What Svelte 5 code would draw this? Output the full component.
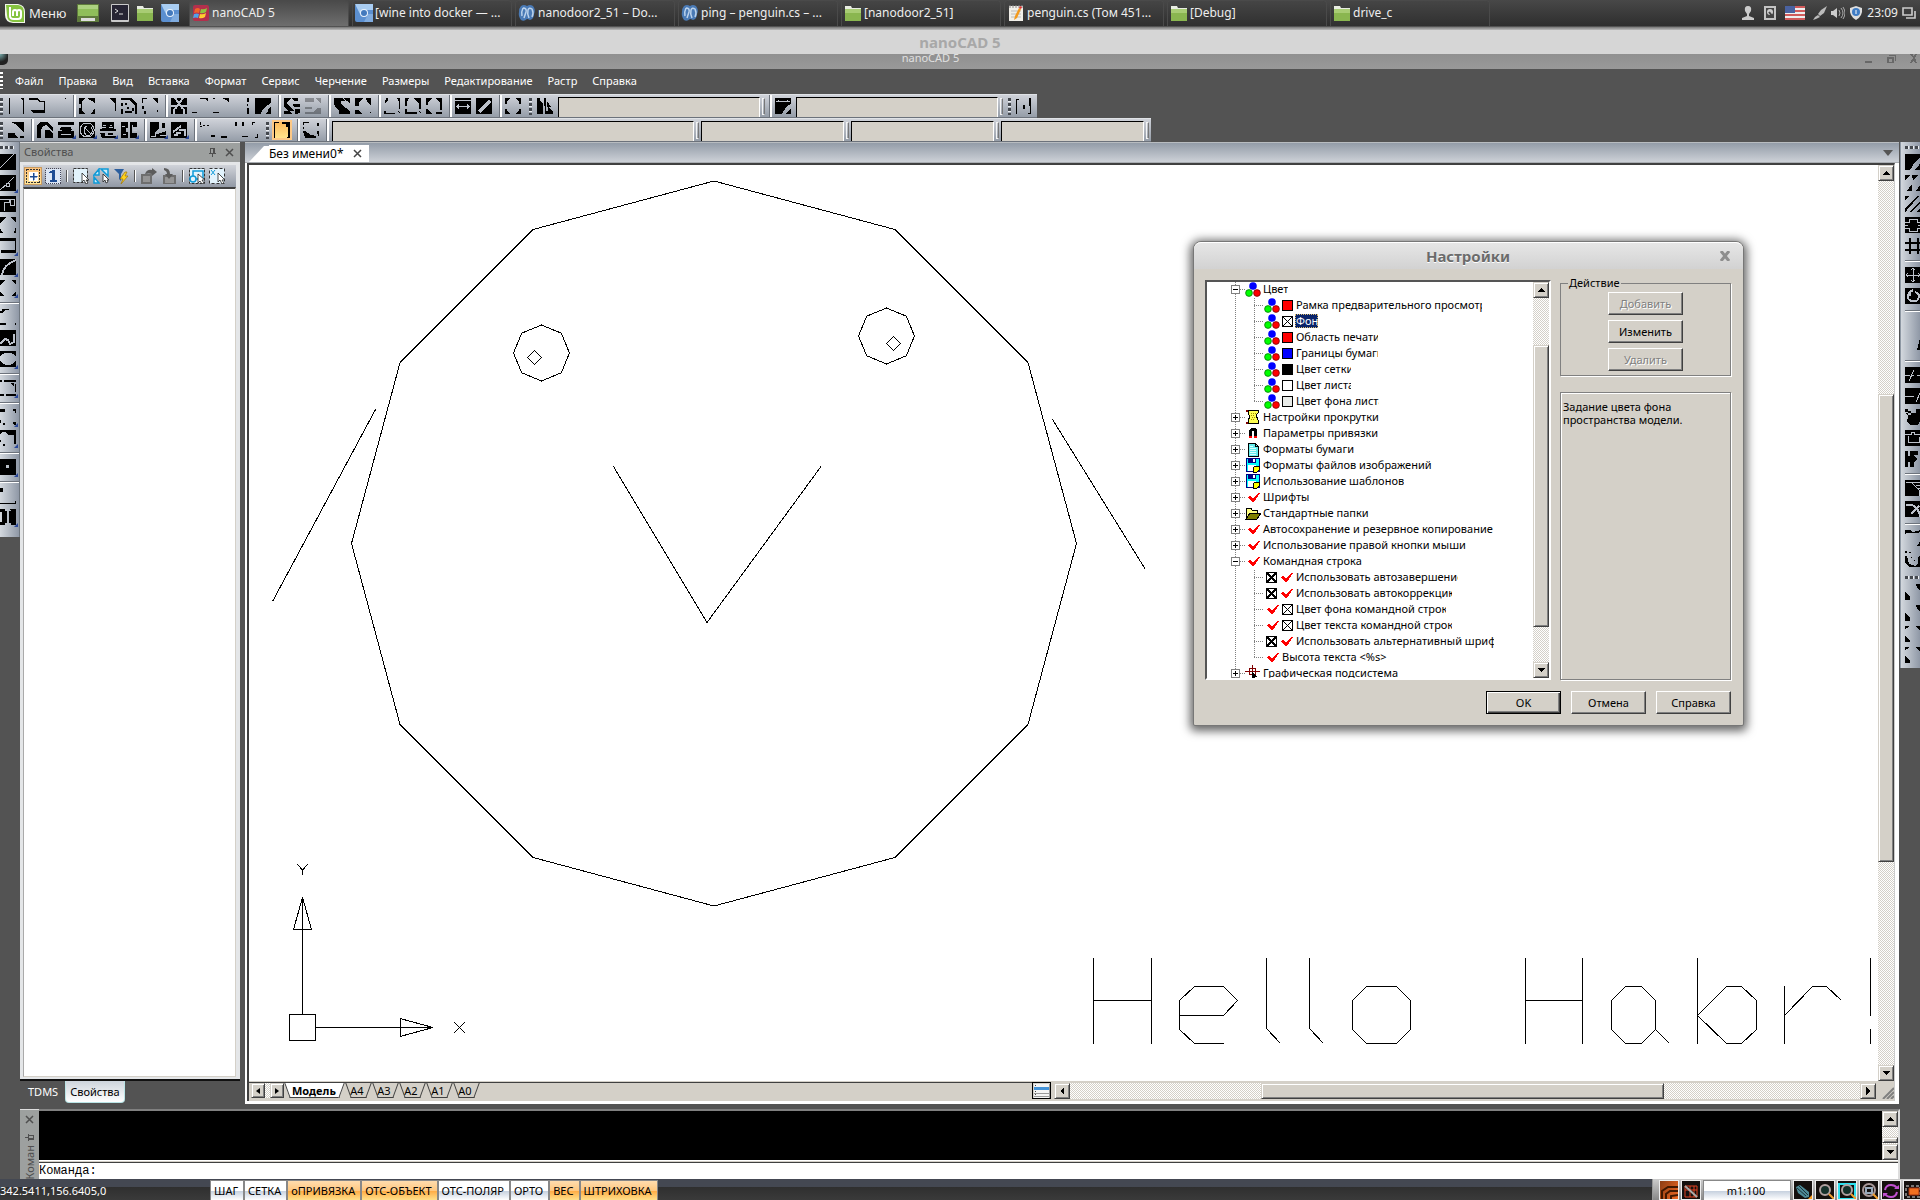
<script lang="ts">
  type Glyph = { k?: string; w?: string; sw?: number; more?: boolean; dim?: boolean };
  type TreeRow = {
    text: string;
    level: number;
    icon: string;
    open?: boolean;
    swatch?: string;
    check?: boolean;
    clip?: number;
    selected?: boolean;
    last?: boolean;
  };

  const box = 'M0 0h16v16H0z';

  const tasks = [
    { title: 'nanoCAD 5', icon: 'wine', active: true },
    { title: '[wine into docker — ...', icon: 'chromium' },
    { title: 'nanodoor2_51 – Do...', icon: 'mono' },
    { title: 'ping – penguin.cs – ...', icon: 'mono' },
    { title: '[nanodoor2_51]', icon: 'folder' },
    { title: 'penguin.cs (Том 451...', icon: 'edit' },
    { title: '[Debug]', icon: 'folder' },
    { title: 'drive_c', icon: 'folder' }
  ];

  const menu = ['Файл', 'Правка', 'Вид', 'Вставка', 'Формат', 'Сервис', 'Черчение', 'Размеры', 'Редактирование', 'Растр', 'Справка'];

  const standardBar: Glyph[][] = [
    [
      { k: 'M1 0h1v16H1zM12 0h4v16h-1V2z' },
      { k: 'M0 0h9l2 3h5v1h-6L8 2H0zM15 4h1v9h-1zM2 12h14v3H5l-3-2z' },
      { k: 'M14 0h2v2z' }
    ],
    [
      { k: 'M0 0h6L3 3v10l3 3H0v-6h2V6H0zM8 0h8v6l-3-3zM16 10v6h-5l3-3z' },
      { k: 'M9 0h7v13h-1V5z' },
      { k: 'M0 0h10l6 6v10h-2V7L8 2H0zM0 5h2v3H0zM0 11h2v5H0zM4 5h2v2H4zM4 13h7v2H4zM6 9h2v2H6zM11 10h2v3h-2z' },
      { k: 'M0 0h5v1H1v4H0zM10 0h6v5l-4-3zM0 8h2v3H0zM2 13h2v3H2zM15 12h1v2h-1z' }
    ],
    [
      { k: box, w: 'M4 0l8 11M12 0L4 11M0 8h5M11 8h5M3 11v5M13 11v5', sw: 2 },
      { k: 'M8 0h8v3l-3-2H8zM0 14h5v1H0z' },
      { k: 'M9 0h7v5l-3-3zM0 14h6v1H0zM0 0h2v1H0z' },
      { k: 'M13 0h2v4h-2zM13 6h1v2h-1zM13 10h2v6h-2z' },
      { k: 'M0 0h16v5L10 9l-3 3-1 4H0zM16 9v7h-6l3-2v-3z' }
    ],
    [
      { k: 'M0 0h14v3h-4L8 0 3 4v2l7 7H4L0 9zM9 6h7v3h-6zM0 13h5l3 3H0zM11 11h5v4l-5 1z' },
      { k: 'M0 0h9v4H0zM11 0h5v6zM0 9h7v2H0zM0 14h8l5-4h3v6H0z', dim: true }
    ],
    [
      { k: 'M0 0h8l3 3H7v3l9 7v3H5v-3L1 8 0 6zM9 0h7v5z' },
      { k: 'M0 0h8L4 4v4H0zM11 0h5v8l-4-4zM0 12h3l4 4H0zM15 14h1v1h-1z' }
    ],
    [
      { k: 'M2 0h2v2l-3 3zM13 0h3v11h-1V4zM0 13h2v2h9v1H0zM13 13l3 1v2z' },
      { k: 'M0 0h4L2 4v4H0zM8 0h8v11h-2V6zM0 11h2v3h10v2H0zM13 13l3 1v2z' },
      { k: 'M0 0h6L2 5v2H0zM10 0h6v12h-2V5zM0 11h2l4 5H0zM10 14h6v2h-6z' }
    ],
    [
      { k: box, w: 'M0 2.5h16M2 8.5h12M4 6.5l-2 2 2 2M12 6.5l2 2-2 2' },
      { k: box, w: 'M3 14L14 3', sw: 4 }
    ],
    [{ k: 'M0 0h5v1L2 3v3H0zM11 0h5v6h-2V3l-3-2zM0 11h2v2l3 2v1H0zM16 11v5h-5v-1l3-2v-2z' }]
  ];

  const drawBar: Glyph[][] = [
    [{ k: 'M3 0h13v10l-5-4-2-3zM0 11h7v2l3 3H0zM12 14h4v2h-4z' }],
    [
      { k: 'M0 16V3l3-3h7l6 6v3l-3-2-4-4-3 1-2 4v8zM8 8h4l4 4v4H8z' },
      { k: 'M0 0h16v3H0zM3 5h10l1 3H2zM0 9h3l1-1h8l1 1h3v7H0z', w: 'M3 12h10', more: true },
      { k: box, w: 'M8 1a7 7 0 1 0 .1 0M5 5l7 7M12 5a4 5 0 1 1-4-1', sw: 1, more: true },
      { k: 'M2 0h12v7h2v2H0V7h2zM0 11h5v3h3v-3h5v3h3v2H2z', w: 'M3 3h3M10 3h2M2 5h4M9 5h4M5 13h8', more: true },
      { k: 'M0 0h7v6H5v4h2v6H0zM9 0h7v5h-5v6h5v5H9z', w: 'M1 4h3M12 8h4M2 12h3M11 3v2', more: true }
    ],
    [
      { k: 'M0 0h9v7L4 11l3 1 9-3v7H0zM12 1h3v5h-3z', w: 'M1 14h4v-3M10 13h6', more: true },
      { k: box, w: 'M2 10l8-6M8 8h6v6M3 13h3v-2h4', sw: 2, more: true }
    ],
    [
      { k: 'M0 0h1v3H0zM3 3h2v1H3zM7 3h2v1H7zM11 13h4v2h-4zM0 4h2v1H0z' },
      { k: 'M14 0h2v4h-2zM0 14h6v2H0z' },
      { k: 'M0 0h2v4H0zM10 0h3v1h-2v2h-1zM0 14h6v1H0zM15 12h1v4h-3v-1h2z' }
    ]
  ];

  const leftBar: Glyph[][] = [
    [
      { k: box, w: 'M0 14L14 0' },
      { k: box, w: 'M0 15L7 9l7-7M6 8h3v3H6z', more: true },
      { k: box, w: 'M0 3h9v3H4v9M10 9V3h4v6z', sw: 1 },
      { k: 'M0 0h6L0 6zM10 0h6v6zM0 11l3 5H0zM16 10v6h-2z' },
      { k: 'M0 0h16v15H1v-3h14V3H0z', more: true },
      { k: box, w: 'M2 16Q3 6 16 1', sw: 2, more: true },
      { k: 'M0 0h5L0 5zM11 0h5v5zM0 11l4 5H0zM16 11v5h-4z', more: true }
    ],
    [
      { k: 'M2 0h7v1H5L3 4H0V2h2zM0 14h6v2H0zM15 14h1v2h-1z' },
      { k: box, w: 'M0 14L5 9l3 1 2 4 4-2V4', sw: 2 },
      { k: 'M0 0h16v5q-8-7-16 0zM0 10q8 8 16 0v6H0z', more: true }
    ],
    [{ k: 'M0 0h2v2H0zM4 0h12v2H4zM0 14h4v2H0zM6 14h10v2H6zM15 4h1v8h-1zM10 3h4v3z', more: true }],
    [
      { k: 'M0 0h5v3H0zM13 0h3v4h-1V2h-2zM0 11h1v3H0zM3 14h2v2H3zM13 13h3v3h-2z', more: true },
      { k: 'M0 0h16v14h-2V5H8L6 2H2L0 4zM0 10h1v2H0zM3 14h2v2H3z', more: true }
    ],
    [{ k: 'M0 0h16v16H0zM6 6v3h3V6z', more: true }],
    [
      { k: 'M0 0h3v4H0zM15 13h1v3H0v-1h15z' },
      { k: 'M0 0h5v2h2v12H5v2H0v-3h2V3H0zM9 0h7v16h-5v-2H9V2h2z', more: true }
    ]
  ];

  const rightBar: Glyph[][] = [
    [
      { k: 'M0 0h16v2l-6 6-5 8H0zM16 8v8h-7l4-3z' },
      { k: 'M0 0h5L0 5zM7 0h6L8 6zM2 16l5-7v7zM11 16l5-7v7z' },
      { k: 'M0 0h4L0 4zM0 12L12 0h2L2 14l-2 2zM4 16L16 4v2L6 16zM16 11v5h-5z' },
      { k: box, w: 'M0 5h4V2h8v3h4M0 11h4v3h8v-3h4M0 8h3M13 8h3', sw: 1 },
      { k: 'M4 0h2v4h6V0h2v4h2v2h-2v5h2v2h-2v3h-2v-3H6v3H4v-3H0v-2h4V6H0V4h4zM6 6v5h6V6z' }
    ],
    [
      { k: box, w: 'M8 1v14M1 8h14M6 3l2-2 2 2M6 13l2 2 2-2M3 6L1 8l2 2M13 6l2 2-2 2' },
      { k: box, w: 'M5 4q-5 6 1 9 7 2 8-4 0-4-4-5M8 2L5 4v4', sw: 2 }
    ],
    [{}, { k: 'M16 0v12h-4l3-12z' }],
    [
      { k: box, w: 'M0 8h5M7 8h2M12 8h4M4 14l5-11' },
      { k: box, w: 'M0 8h9M11 14l5-11' },
      { k: 'M0 4l3 3-1 6 4 3h7l2-4V4zM3 2h3v4H3zM11 0h5v4h-5zM0 0h3v3H0z' },
      { k: box, w: 'M0 4h6V2h3v2h7M3 6v6h11V7', sw: 1 },
      { k: 'M0 0h3v16H0zM5 0h8v4H9l3 4-3 3v5H5v-5H3V5h2zM15 0h1v16h-1z' }
    ],
    [
      { k: box, w: 'M1 2h5l8 8v6M7 2h9M11 5h5M13 8h3' },
      { k: box, w: 'M1 4h6q7 3 8 12M6 13l8-8', sw: 2 }
    ],
    [
      { k: 'M0 0h5l3 2 8-2v1l-3 2H2L0 4zM16 8v8h-4l2-3z' },
      { k: 'M0 0h2v2H0zM4 1h2v1H4zM0 5h2l2 8 6 2 3-3V6l3-1v11H4L0 11zM6 6h1v1H6zM9 9h1v1H9z' }
    ]
  ];

  const rightExtra: Glyph[] = [
    { k: 'M11 0h5v8l-4-5zM0 7l5 6v3H0z' },
    { k: 'M11 0h5v8l-4-5zM0 7l5 6v3H0z' },
    { k: 'M0 0h4v1L0 3zM10 0h6v6l-3-4zM0 10l5 4v2H0z' },
    { k: 'M0 0h4v1L0 3zM10 0h6v6l-3-4zM0 9l5 5v2H0z' }
  ];

  const sheets = ['A4', 'A3', 'A2', 'A1', 'A0'];

  const tree: TreeRow[] = [
    { text: 'Цвет', level: 1, icon: 'rgb', open: true },
    { text: 'Рамка предварительного просмотра', level: 2, icon: 'rgb', swatch: '#ff0000', clip: 187 },
    { text: 'Фон', level: 2, icon: 'rgb', swatch: 'none', clip: 23, selected: true },
    { text: 'Область печати', level: 2, icon: 'rgb', swatch: '#ff0000', clip: 83 },
    { text: 'Границы бумаги', level: 2, icon: 'rgb', swatch: '#0000ff', clip: 83 },
    { text: 'Цвет сетки', level: 2, icon: 'rgb', swatch: '#000000', clip: 56 },
    { text: 'Цвет листа', level: 2, icon: 'rgb', swatch: '#ffffff', clip: 56 },
    { text: 'Цвет фона листа', level: 2, icon: 'rgb', swatch: '#e9ece9', clip: 84, last: true },
    { text: 'Настройки прокрутки', level: 1, icon: 'scroll' },
    { text: 'Параметры привязки', level: 1, icon: 'magnet' },
    { text: 'Форматы бумаги', level: 1, icon: 'paper' },
    { text: 'Форматы файлов изображений', level: 1, icon: 'disk' },
    { text: 'Использование шаблонов', level: 1, icon: 'disk' },
    { text: 'Шрифты', level: 1, icon: 'tick' },
    { text: 'Стандартные папки', level: 1, icon: 'dir' },
    { text: 'Автосохранение и резервное копирование', level: 1, icon: 'tick' },
    { text: 'Использование правой кнопки мыши', level: 1, icon: 'tick' },
    { text: 'Командная строка', level: 1, icon: 'tick', open: true },
    { text: 'Использовать автозавершение', level: 2, icon: 'tick', check: true, clip: 163 },
    { text: 'Использовать автокоррекцию', level: 2, icon: 'tick', check: true, clip: 157 },
    { text: 'Цвет фона командной строки', level: 2, icon: 'tick', swatch: 'none', clip: 151 },
    { text: 'Цвет текста командной строки', level: 2, icon: 'tick', swatch: 'none', clip: 157 },
    { text: 'Использовать альтернативный шрифт', level: 2, icon: 'tick', check: true, clip: 199 },
    { text: 'Высота текста <%s>', level: 2, icon: 'tick', last: true },
    { text: 'Графическая подсистема', level: 1, icon: 'cross' }
  ];

  const modes = [
    { text: 'ШАГ', on: false },
    { text: 'СЕТКА', on: false },
    { text: 'оПРИВЯЗКА', on: true },
    { text: 'ОТС-ОБЪЕКТ', on: true },
    { text: 'ОТС-ПОЛЯР', on: false },
    { text: 'ОРТО', on: false },
    { text: 'ВЕС', on: true },
    { text: 'ШТРИХОВКА', on: true }
  ];

  // vertices of a regular polygon, first one to the right of the centre
  function ngon(n: number, cx: number, cy: number, r: number) {
    return Array.from({ length: n }, (_, i) => {
      const a = (i * 2 * Math.PI) / n;
      return `${(cx + r * Math.cos(a)).toFixed(1)},${(cy + r * Math.sin(a)).toFixed(1)}`;
    }).join(' ');
  }
</script>

{#snippet tool(g: Glyph)}
  <button class="tool" class:dim={g.dim} aria-label="Инструмент">
    <svg viewBox="0 0 16 16" width="16" height="16" shape-rendering="crispEdges">
      {#if g.k}<path d={g.k} />{/if}
      {#if g.w}<path class="cut" d={g.w} stroke-width={g.sw ?? 1} />{/if}
    </svg>
    {#if g.more}<i class="more"></i>{/if}
  </button>
{/snippet}

{#snippet groups(list: Glyph[][])}
  {#each list as group, i}
    {#if i > 0}<span class="sep"></span>{/if}
    {#each group as g}{@render tool(g)}{/each}
  {/each}
{/snippet}

{#snippet arrow(dir: string)}
  <button class="arrow" aria-label={dir}>
    <svg viewBox="0 0 8 8" width="8" height="8" shape-rendering="crispEdges">
      {#if dir === 'up'}<path d="M4 2L8 6H0z" />{/if}
      {#if dir === 'down'}<path d="M0 2h8L4 6z" />{/if}
      {#if dir === 'left'}<path d="M6 0v8L2 4z" />{/if}
      {#if dir === 'right'}<path d="M2 0v8l4-4z" />{/if}
    </svg>
  </button>
{/snippet}

{#snippet scrollbar(axis: string, before: number, thumb: number, after: number)}
  <div class="scrollbar {axis}">
    {@render arrow(axis === 'v' ? 'up' : 'left')}
    <span style:flex-grow={before}></span>
    <span class="thumb" style:flex-grow={thumb}></span>
    <span style:flex-grow={after}></span>
    {@render arrow(axis === 'v' ? 'down' : 'right')}
  </div>
{/snippet}

{#snippet pin()}
  <svg viewBox="0 0 9 9" width="9" height="9" shape-rendering="crispEdges"><path d="M2 0h5v5h1v1H5v3H4V6H1V5h1zM3 1v4h2V1z" /></svg>
{/snippet}

{#snippet cross()}
  <svg viewBox="0 0 9 9" width="9" height="9"><path d="M1 1l7 7M8 1l-7 7" fill="none" stroke="currentColor" stroke-width="1.5" /></svg>
{/snippet}

{#snippet appIcon(name: string)}
  <svg viewBox="0 0 18 18" width="18" height="18">
    {#if name === 'wine'}
      <rect x="1" y="1" width="16" height="16" rx="2" fill="#b3304c" />
      <path d="M3 5q3-2 5 0l-1 4q-2-1-5 0z" fill="#f0642a" /><path d="M9 5q3 1 6-1l-1 4q-3 2-6 1z" fill="#8cc63f" />
      <path d="M2 10q3-1 5 0l-1 4q-2-1-5 0z" fill="#4fa3e8" /><path d="M8 10q3 1 6-1l-1 4q-3 2-6 1z" fill="#ffcf30" />
    {:else if name === 'chromium'}
      <rect width="18" height="18" rx="2" fill="#5b8fd0" /><path d="M0 0h18v6H9q-3 0-4 4z" fill="#a9cdf2" />
      <path d="M9 18l4-8h5v8z" fill="#7fabdf" /><circle cx="9" cy="9" r="4" fill="#e9f2fc" /><circle cx="9" cy="9" r="3" fill="#4379bd" />
    {:else if name === 'mono'}
      <path d="M3 2q3-2 6 0 3-2 6 0 3 4 1 8 0 5-4 6-2-1-3-1-3 3-6 1-3-4-2-8 0-4 2-6z" fill="#4a7ab5" />
      <path d="M5 4q-2 4-1 8M5 4q4 0 3 4l-2 6M11 14q-2-4-1-8 1-3 4-1 2 4 0 8" fill="none" stroke="#bcd3ec" stroke-width="1.5" />
    {:else if name === 'folder'}
      <path d="M1 2h6l1 2h9v13H1z" fill="#e8ece2" /><path d="M1 5h16v12H1z" fill="#8ab650" /><path d="M1 5h16v4H1z" fill="#a8cc74" />
    {:else if name === 'edit'}
      <path d="M2 2h14v15H2z" fill="#f1efe9" /><path d="M3 1v3M6 1v3M9 1v3M12 1v3M15 1v3" stroke="#888" />
      <path d="M4 7h10M4 10h10M4 13h10" stroke="#bbb" /><path d="M12 4l2 1-4 9-3 2 1-4z" fill="#f39a1e" /><path d="M12 4l1-2 2 1-1 2z" fill="#d33" />
    {:else if name === 'term'}
      <rect x="0" y="0" width="18" height="18" rx="1" fill="#c9c9c9" /><rect x="1" y="1" width="16" height="15" fill="#262433" /><path d="M4 5l3 2-3 2M8 10h4" fill="none" stroke="#ddd" />
    {/if}
  </svg>
{/snippet}

{#snippet treeIcon(name: string)}
  <svg viewBox="0 0 16 16" width="16" height="16" shape-rendering={name === 'rgb' ? 'auto' : 'crispEdges'}>
    {#if name === 'rgb'}
      <circle cx="8" cy="5" r="3.8" fill="#00f" /><circle cx="4" cy="12" r="3.4" fill="#0f0" stroke="#060" stroke-width=".7" /><circle cx="12" cy="12" r="3.4" fill="#f00" stroke="#600" stroke-width=".7" />
    {:else if name === 'tick'}
      <path d="M3 8l2-1 3 3 5-6h2l-6 9H7z" fill="#f00" />
    {:else if name === 'scroll'}
      <path d="M1 2h13M1 14h13" stroke="#800000" stroke-width="2" /><path d="M3 1h10v3l-2 2 2 5v3H3v-3l2-3-2-4z" fill="#ffff50" stroke="#000" /><path d="M6 4h5M6 6h4M7 8h3M6 10h4" stroke="#a09000" stroke-dasharray="1 1" />
    {:else if name === 'magnet'}
      <path d="M4 13V5l2-2h4l2 2v8H9V6H7v7z" /><path d="M4 11h3v2H4zM9 11h3v2H9z" fill="#f00" />
    {:else if name === 'paper'}
      <path d="M3 2h7l3 3v10H3z" fill="#6ee" stroke="#000" /><path d="M5 5h3M5 7h6M5 9h6M5 11h6M5 13h6" stroke="#dff" /><path d="M10 2v3h3" fill="none" stroke="#000" />
    {:else if name === 'disk'}
      <path d="M1 1h13v13H1z" fill="#0ff" stroke="#000080" /><path d="M3 1h8v5H3z" fill="#000080" /><path d="M8 2h2v3H8zM3 8h8v6H3z" fill="#fff" /><path d="M8 11l2-2h4v4l-2 2H8z" fill="#ff0" stroke="#000" />
    {:else if name === 'dir'}
      <path d="M1 14V4l2-1h3l1 2h5v3" fill="#ffff80" stroke="#000" /><path d="M1 14l4-6h11l-4 6z" fill="#808000" stroke="#000" />
    {:else if name === 'cross'}
      <path d="M7 0v16M0 6h15M4 3h6v6H4z" fill="none" stroke="#800000" /><path d="M7 7v9l2-2 2 2 1-1-2-3h3z" />
    {/if}
  </svg>
{/snippet}

<div class="desktop">
  <header class="panel">
    <button class="start">
      <svg viewBox="0 0 22 22" width="22" height="22">
        <path d="M1 2h13q7 1 7 8v11H9Q1 20 1 13z" fill="#f2f7ea" /><path d="M2 3h12q6 1 6 7v10H9q-6-1-6-7z" fill="#86c440" />
        <path d="M6 5v9q0 3 4 3h4q3 0 3-3v-4q0-2-2-2t-2 2v4M13 10q0-2-2-2t-2 2v4" fill="none" stroke="#fff" stroke-width="2" />
      </svg>
      Меню
    </button>
    <button class="launch wide" aria-label="Рабочий стол">
      <svg viewBox="0 0 22 18" width="22" height="18"><path d="M0 0h22v18H0z" fill="#5e7a3c" /><path d="M1 1h20v11H1z" fill="#8fbe5a" /><path d="M1 1h20v4H1z" fill="#acd080" /><path d="M4 14h14v3H4z" fill="#ddd" /></svg>
    </button>
    <button class="launch" aria-label="Терминал">{@render appIcon('term')}</button>
    <button class="launch" aria-label="Файлы">{@render appIcon('folder')}</button>
    <button class="launch" aria-label="Chromium">{@render appIcon('chromium')}</button>
    <nav class="tasks">
      {#each tasks as t}
        <button class="task" class:active={t.active}>{@render appIcon(t.icon)}<span>{t.title}</span></button>
      {/each}
    </nav>
    <div class="tray">
      <svg viewBox="0 0 14 14" width="14" height="14"><path d="M7 0q4 0 3 5l-2 3v2l5 2v2H1v-2l5-2V8L4 5q-1-5 3-5z" fill="#ccc" /></svg>
      <svg class="gap" viewBox="0 0 14 14" width="14" height="14"><path d="M1 0h12v14H1z" fill="#c4c4c4" /><path d="M3 2h8v10H3z" fill="#444" /><circle cx="7" cy="6" r="3" fill="#ccc" /><path d="M6 6l4 5" stroke="#444" stroke-width="2" /></svg>
      <svg class="gap" viewBox="0 0 20 14" width="20" height="14" shape-rendering="crispEdges"><path d="M0 0h20v14H0z" fill="#eee" /><path d="M0 1h20M0 5h20M0 9h20M0 13h20" stroke="#d05a5a" stroke-width="2" /><path d="M0 0h10v7H0z" fill="#4a62a0" /></svg>
      <svg class="gap" viewBox="0 0 14 14" width="14" height="14"><path d="M14 0l-3 7-4 3-2-2 3-4zM5 9l2 2-4 2-3 1 2-3z" fill="#bbb" /></svg>
      <svg viewBox="0 0 14 14" width="14" height="14"><path d="M0 5h2l4-3v10L2 9H0z" fill="#ccc" /><path d="M8 4q2 3 0 6M10 2q4 5 0 10M12 1q4 6 0 12" fill="none" stroke="#aaa" /></svg>
      <svg viewBox="0 0 14 14" width="14" height="14"><path d="M7 0l6 2q1 8-6 12Q0 10 1 2z" fill="#ddd" /><circle cx="7" cy="6" r="4" fill="#3f7cc4" /><path d="M7 4v4" stroke="#fff" /></svg>
      <time>23:09</time>
      <svg viewBox="0 0 14 14" width="14" height="14"><path d="M1 2h9v7H1zM4 12h9V5" fill="none" stroke="#ccc" stroke-width="1.6" /></svg>
    </div>
  </header>

  <div class="caption">nanoCAD 5</div>
  <div class="inner-caption">
    <span class="ball"></span>
    <span class="inner-title">nanoCAD 5</span>
    <svg viewBox="0 0 52 10" width="52" height="10" shape-rendering="crispEdges"><path d="M0 7h7v2H0zM22 3h7v6h-7zM24 5h3v3h-3zM24 1h7v6h-1V2h-6zM45 0h3l1 3 1-3h2l-2 4 2 5h-2l-1-3-2 3h-2l3-5z" fill-rule="evenodd" fill="#686868" /></svg>
  </div>

  <nav class="menu">
    <i class="grip light"></i>
    {#each menu as item}<button>{item}</button>{/each}
  </nav>

  <div class="bars">
    <div class="bar first">
      <i class="grip"></i>
      {@render groups(standardBar)}
    </div>
    <div class="bar">
      <i class="grip"></i>
      {@render tool({ k: 'M0 0h3v3l3 2v11H0zM7 0h2v13h2V9l5 4v3H8zM10 3l4 6h-4z' })}
      <select class="short" aria-label="Слой"></select>
      <span class="end"></span>
      <span class="sep"></span>
      {@render tool({ k: 'M0 0h16v6l-5 3-4 7H0zM16 10v6h-6l3-3z', w: 'M1 3h14M3 2v2M12 2v2' })}
      <select class="short" aria-label="Тип линии"></select>
      <span class="end"></span>
    </div>
    <div class="bar">
      <i class="grip"></i>
      {@render tool({ k: 'M0 1h3v1H1v14H0zM7 7h2v4H7zM13 0h2v16h-3v-1h2z' })}
    </div>
  </div>

  <div class="bars">
    <div class="bar first">
      <i class="grip"></i>
      {@render groups(drawBar)}
    </div>
    <div class="bar">
      <i class="grip"></i>
      <button class="tool hot" aria-label="Слои">
        <svg viewBox="0 0 16 16" width="16" height="16" shape-rendering="crispEdges"><path d="M0 0h5v1H1v15H0zM8 0h8v16h-3v-1h1V5h-2V2H8z" /></svg>
      </button>
      <span class="sep"></span>
      {@render tool({ k: 'M0 0h6v1H1v2H0zM0 5h1v2H0zM0 9h2l6 4 5 1v2H2zM14 1h2v3h-2zM14 9h2v5h-1z' })}
      <span class="sep"></span>
      <select class="long" aria-label="Текущий слой"></select>
      <span class="end"></span>
      <select class="mid" aria-label="Цвет"></select>
      <span class="end"></span>
      <select class="mid" aria-label="Линия"></select>
      <span class="end"></span>
      <select class="mid" aria-label="Вес"></select>
      <span class="end"></span>
    </div>
  </div>

  <main>
    <aside class="dock left">
      <i class="grip flat"></i>
      {@render groups(leftBar)}
    </aside>

    <section class="side">
      <div class="properties">
        <header><span>Свойства</span>{@render pin()}{@render cross()}</header>
        <div class="prop-tools">
          <button class="hot" aria-label="Добавить"><svg viewBox="0 0 16 16" width="16" height="16" shape-rendering="crispEdges"><path d="M1.500 1.500h13v13h-13z" fill="none" stroke="#333" stroke-dasharray="2 1" /><path d="M4 4h9v9H4z" fill="#fff" /><path d="M8 5h1v3h3v1H9v3H8V9H5V8h3z" fill="#1d4c94" stroke="#1d4c94" stroke-width=".5" /></svg></button>
          <button aria-label="Один"><svg viewBox="0 0 16 16" width="16" height="16" shape-rendering="crispEdges"><path d="M.500 .500h15v15H.500z" fill="#dbe6f5" stroke="#445" stroke-dasharray="1 1" /><path d="M4 4l4-2h2v10h2v2H5v-2h2V5H4z" fill="#1d4c94" /></svg></button>
          <i></i>
          <button aria-label="Выбрать"><svg viewBox="0 0 16 16" width="16" height="16"><path d="M.500 .500h14v14H.500z" fill="#e2f3fc" stroke="#333" stroke-dasharray="3 1" /><path d="M9 5v9l2-2 2 4 2-1-2-3h3z" fill="#fff" stroke="#222" stroke-width=".8" /></svg></button>
          <button aria-label="Инвертировать"><svg viewBox="0 0 16 16" width="16" height="16"><path d="M1 7l5-6v6zM1 9v6h5zM8 1h7v7z" fill="#c9ecfb" stroke="#0e9ad8" stroke-width="1.500" /><path d="M10 6v8l2-2 1 3 2-1-1-2h2z" fill="#fff" stroke="#222" stroke-width=".8" /></svg></button>
          <button aria-label="Фильтр"><svg viewBox="0 0 16 16" width="16" height="16"><path d="M1 1h10L8 6v7l-2-2V6z" fill="#2c5f9e" /><path d="M12 4l-5 7h3l-2 5 7-8h-3l2-4z" fill="#ffd21e" stroke="#a07800" stroke-width=".7" /></svg></button>
          <i></i>
          <button aria-label="Экспорт"><svg viewBox="0 0 16 16" width="16" height="16"><path d="M0 6h11v10H0z" fill="#6e6e6e" /><path d="M2 9h7M2 11h7M2 13h7" stroke="#bbb" /><path d="M4 6q2-5 7-4V0l5 4-5 4V6q-3-1-7 0z" fill="#5c5c5c" /></svg></button>
          <button aria-label="Импорт"><svg viewBox="0 0 16 16" width="16" height="16"><path d="M2 7h13v9H2z" fill="#6e6e6e" /><path d="M4 10h9M4 12h9M4 14h9" stroke="#bbb" /><path d="M3 0q6 0 6 6h3l-4 5-4-5h2q0-3-3-4z" fill="#5c5c5c" /></svg></button>
          <i></i>
          <button aria-label="Быстрый выбор"><svg viewBox="0 0 16 16" width="16" height="16"><path d="M.500 .500h15v15H.500z" fill="#e2f3fc" stroke="#333" stroke-dasharray="3 1" /><path d="M4 3h10v8H4z" fill="none" stroke="#0e9ad8" stroke-width="1.500" /><circle cx="4" cy="11" r="3" fill="#e2f3fc" stroke="#0e9ad8" stroke-width="1.500" /><path d="M9 6v9l2-2 2 3 2-1-2-3h3z" fill="#fff" stroke="#222" stroke-width=".8" /></svg></button>
          <button aria-label="Снять выбор"><svg viewBox="0 0 16 16" width="16" height="16"><path d="M.500 .500h15v15H.500z" fill="#e2f3fc" stroke="#333" stroke-dasharray="3 2" /><path d="M2 2l4 5M6 2L2 7" stroke="#0e9ad8" /><path d="M9 5v9l2-2 2 4 2-1-2-3h3z" fill="#fff" stroke="#222" stroke-width=".8" /></svg></button>
        </div>
        <div class="prop-list"></div>
      </div>
      <div class="side-tabs"><button>TDMS</button><button class="current">Свойства</button></div>
    </section>

    <section class="document">
      <div class="doc-tabs">
        <svg viewBox="0 0 20 17" width="20" height="17"><path d="M0 17L15 1h5v16z" fill="#fff" /></svg>
        <button>Без имени0*</button>
        <span class="doc-close">{@render cross()}</span>
        <svg class="drop" viewBox="0 0 10 6" width="10" height="6"><path d="M0 0h10L5 6z" fill="#555" /></svg>
      </div>
      <div class="sheet">
        <div class="view">
          <svg class="drawing" width="100%" height="100%" shape-rendering="crispEdges">
            <g transform="translate(-249 -165)" fill="none" stroke="#000">
              <polygon points={ngon(12, 714, 543.5, 362.5)} />
              <polygon points={ngon(8, 541.5, 353, 28)} />
              <polygon points={ngon(4, 534.5, 357.5, 7)} />
              <polygon points={ngon(8, 886.5, 336, 28)} />
              <polygon points={ngon(4, 893.5, 343.5, 7)} />
              <path d="M613.500 466.500L707 622.500 821 466.500" />
              <path d="M375.500 409.500L272.500 601.500M1052.500 419.500L1145.500 569.500" />
              <!-- coordinate axes -->
              <path d="M289.500 1014.500h26v26h-26zM302.500 1014.500V897.500l-9 32h18l-9-32M315.500 1027.500H433l-33-9v18l33-9" />
              <path d="M297 864l5.500 6 5.500-6M302.500 870v5M454 1022l11 11M465 1022l-11 11" />
              <!-- single-line lettering -->
              <path d="M1093.500 957.500v86M1151.500 957.500v86M1093.500 1000.500h58" />
              <path d="M1179.500 1015.500h44l14-15-14-14h-29l-15 14v29l15 14h29" />
              <path d="M1266.500 957.500v71l14 15M1309.500 957.500v71l14 15" />
              <path d="M1352.500 1000.500l14-14h30l14 14v29l-14 14h-30l-14-14z" />
              <path d="M1525.500 957.500v86M1582.500 957.500v86M1525.500 1000.500h57" />
              <path d="M1655.500 1029.500v-29l-14-14h-16l-14 14v29l14 14h16l14-14 14 14" />
              <path d="M1697.500 957.500v86M1697.500 1015.500l29-29h15l15 14v29l-15 14h-15l-29-28" />
              <path d="M1784.500 986v57.500M1784.500 1015.500l28-29h14l15 14" />
              <path d="M1870.500 957.500v58M1870.500 1029v14.500" />
            </g>
          </svg>
          {@render scrollbar('v', 213, 468, 203)}
        </div>
        <div class="sheet-bar">
          <div class="sheet-tabs">
            <button class="step" aria-label="Предыдущий"><svg viewBox="0 0 4 6" width="4" height="6"><path d="M4 0v6L0 3z" /></svg></button>
            <span class="track"></span>
            <button class="step" aria-label="Следующий"><svg viewBox="0 0 4 6" width="4" height="6"><path d="M0 0v6l4-3z" /></svg></button>
            <button class="sheet-tab model">Модель</button>
            {#each sheets as s}<button class="sheet-tab">{s}</button>{/each}
          </div>
          <button class="split" aria-label="Листы"><svg viewBox="0 0 16 14" width="16" height="14" shape-rendering="crispEdges"><path d="M0 0h16v14H0z" fill="#f4f4f4" /><path d="M0 3h16v3H0z" fill="#4594d8" /><path d="M0 9h16M0 12h16M15 0v14" stroke="#999" /><path d="M1 1h1v1H1zM1 7h1v1H1zM1 10h1v1H1z" fill="#444" /></svg></button>
          {@render scrollbar('h', 192, 402, 196)}
          <svg class="resize" viewBox="0 0 12 12" width="12" height="12"><path d="M1 12L12 1M5 12l7-7M9 12l3-3" stroke="#808080" stroke-width="2" /></svg>
        </div>
      </div>
    </section>

    <aside class="dock right">
      <i class="grip flat"></i>
      {@render groups(rightBar)}
      <i class="grip flat"></i>
      {#each rightExtra as g}{@render tool(g)}{/each}
    </aside>
  </main>

  <section class="command">
    <div class="command-side">{@render cross()}<span class="turned">{@render pin()}</span><span class="command-name">Коман</span></div>
    <div class="console">
      <div class="history">
        <div class="output"></div>
        {@render scrollbar('v', 12, 5, 1)}
      </div>
      <div class="prompt"><label for="cmd">Команда:</label><input id="cmd" type="text" /></div>
    </div>
  </section>

  <footer class="status">
    <span class="coords">342.5411,156.6405,0</span>
    {#each modes as m}<button class="mode" class:on={m.on}>{m.text}</button>{/each}
    <span class="fill"></span>
    <div class="status-tools">
      <button class="mini orange" aria-label="Вид"><svg viewBox="0 0 18 16" width="18" height="16"><path d="M2 16V8l6-4h10M6 16v-5l4-3h8M11 16v-3l7-1" fill="none" stroke="#401800" stroke-width="2" /></svg></button>
      <button class="mini" aria-label="Сетка"><svg viewBox="0 0 18 16" width="18" height="16"><path d="M3 3h12v11H3zM3 7h12M8 3v11M12 3v11" fill="none" stroke="#e04020" /><path d="M3 3l12 11" stroke="#aaa" stroke-width="2" /></svg></button>
      <button class="scale">m1:100</button>
      <button class="mini" aria-label="Рука"><svg viewBox="0 0 18 16" width="18" height="16"><path d="M2 4l4-2 9 7v5l-4 1-7-5z" fill="#4e8c98" /><path d="M5 3l9 9M3 5l9 8" stroke="#1c3238" /><path d="M18 12v4h-4z" fill="#ffa020" /></svg></button>
      {#each ['none', '#2ee0ee'] as frame}
        <button class="mini" aria-label="Масштаб"><svg viewBox="0 0 18 16" width="18" height="16"><path d="M1 1h16v15H1z" fill="none" stroke={frame} stroke-width="2" /><circle cx="9" cy="7" r="5" fill="#14302a" stroke="#b0a0a0" stroke-width="2" /><path d="M13 11l5 5" stroke="#f0a030" stroke-width="2" /></svg></button>
      {/each}
      <button class="mini" aria-label="Показать рамкой"><svg viewBox="0 0 18 16" width="18" height="16"><circle cx="9" cy="7" r="6" fill="none" stroke="#a89898" stroke-width="2" /><path d="M6 5h6v5H6z" fill="none" stroke="#9ab" stroke-width="2" /><path d="M13 11l5 5" stroke="#f0a030" stroke-width="2" /></svg></button>
      <button class="mini" aria-label="Обновить"><svg viewBox="0 0 18 16" width="18" height="16"><path d="M3 7q1-5 6-5 4 0 6 3M15 9q-1 5-6 5-4 0-6-3" fill="none" stroke="#c050d0" stroke-width="2" /><path d="M12 6h5V2zM6 10H1v4z" fill="#c050d0" /></svg></button>
      <button class="mini" aria-label="Экран"><svg viewBox="0 0 18 16" width="18" height="16"><path d="M2 3h14v11H2z" fill="none" stroke="#ddd" stroke-dasharray="3 2" /><path d="M5 5h10v7H5z" fill="#f07020" stroke="#a03010" /></svg></button>
    </div>
  </footer>

  <div class="dialog" role="dialog" aria-labelledby="dialog-title">
    <header>
      <h2 id="dialog-title">Настройки</h2>
      <button class="dialog-close" aria-label="Закрыть"><svg viewBox="0 0 10 10" width="10" height="10"><path d="M1 0l8 10M9 0L1 10" stroke="#8e8e8e" stroke-width="3" /></svg></button>
    </header>
    <div class="dialog-body">
      <div class="tree-box">
        <div class="tree">
          {#each tree as row, i}
            <div class="row level{row.level}" class:last={row.last}>
              {#if row.level === 1}
                <button class="expander" aria-label={row.open ? 'Свернуть' : 'Развернуть'}>
                  <svg viewBox="0 0 9 9" width="9" height="9" shape-rendering="crispEdges"><path d="M.500 .500h8v8h-8z" fill="#fff" stroke="#808080" /><path d={row.open ? 'M2 4h5v1H2z' : 'M2 4h5v1H2zM4 2h1v5H4z'} /></svg>
                </button>
              {/if}
              {#if row.check}<input type="checkbox" id="opt{i}" checked />{/if}
              {@render treeIcon(row.icon)}
              {#if row.swatch}
                <span class="swatch" class:empty={row.swatch === 'none'} style:background-color={row.swatch === 'none' ? null : row.swatch}></span>
              {/if}
              {#if row.check}
                <label for="opt{i}" style:width="{row.clip}px">{row.text}</label>
              {:else}
                <span class="text" class:selected={row.selected} style:width={row.clip ? `${row.clip}px` : null}>{row.text}</span>
              {/if}
            </div>
          {/each}
        </div>
        {@render scrollbar('v', 48, 286, 36)}
      </div>
      <div class="actions">
        <fieldset>
          <legend>Действие</legend>
          <button class="push" disabled>Добавить</button>
          <button class="push">Изменить</button>
          <button class="push" disabled>Удалить</button>
        </fieldset>
        <div class="hint">Задание цвета фона пространства модели.</div>
      </div>
    </div>
    <div class="dialog-foot">
      <button class="push default">OK</button>
      <button class="push">Отмена</button>
      <button class="push">Справка</button>
    </div>
  </div>
</div>

<style>
  :global(body) {
    margin: 0;
    background: #535353;
  }

  .desktop {
    position: relative;
    display: flex;
    flex-direction: column;
    height: 100vh;
    overflow: hidden;
    background: #535353;
    color: #000;
    font: 11px/14px 'Noto Sans', 'Open Sans', sans-serif;
  }

  .desktop * {
    box-sizing: border-box;
  }

  button,
  input,
  select {
    margin: 0;
    padding: 0;
    border: 0;
    border-radius: 0;
    background: none;
    color: inherit;
    font: inherit;
    flex: none;
  }

  svg {
    display: block;
    flex: none;
  }

  /* top panel */
  .panel {
    display: flex;
    align-items: center;
    flex: none;
    height: 30px;
    padding: 0 4px 4px;
    background: linear-gradient(#484848, #2e2e2e 26px, #777 27px, #bbb 30px);
    color: #eee;
    font-size: 12px;
  }

  .start {
    display: flex;
    align-items: center;
    gap: 3px;
    width: 73px;
    font-size: 13px;
  }

  .launch {
    width: 25px;
  }

  .launch.wide {
    width: 34px;
  }

  .tasks {
    display: flex;
    flex: 1;
    gap: 3px;
    margin-left: 3px;
  }

  .task {
    display: flex;
    align-items: center;
    gap: 2px;
    width: 160px;
    height: 26px;
    padding: 0 0 1px 2px;
    border: 1px solid #4a4a4a;
    border-bottom: 0;
    border-radius: 4px 4px 0 0;
    background: linear-gradient(#454545, #303030);
    white-space: nowrap;
  }

  .task.active {
    background: linear-gradient(#4a4a4a, #6e6e6e);
  }

  .tray {
    display: flex;
    align-items: center;
    gap: 4px;
  }

  .tray .gap {
    margin-left: 4px;
  }

  .caption {
    flex: none;
    height: 24px;
    background: #d6d6d6;
    color: #a8a8a8;
    font: bold 15px/24px 'Noto Sans', sans-serif;
    text-align: center;
  }

  .inner-caption {
    display: flex;
    flex: none;
    height: 15px;
    padding-right: 3px;
    background: linear-gradient(#909090, #999);
    color: #e0e0e0;
    line-height: 8px;
  }

  .ball {
    width: 8px;
    height: 11px;
    border-radius: 0 0 5px 0;
    background: radial-gradient(circle at 0 0, #7aa, #222 8px);
  }

  .inner-title {
    flex: 1;
    margin-right: 12px;
    text-align: center;
  }

  .menu {
    display: flex;
    align-items: center;
    flex: none;
    height: 25px;
    padding-bottom: 2px;
    color: #fff;
  }

  .menu button {
    margin-right: 15px;
  }

  .grip {
    flex: none;
    width: 3px;
    height: 17px;
    margin: 0 5px 0 0;
    background: repeating-linear-gradient(#44484e 0 3px, #eef0f3 3px 4px, transparent 4px 5px);
  }

  .grip.light {
    margin: 0 12px 0 0;
    background: repeating-linear-gradient(#fff 0 2px, transparent 2px 4px);
  }

  .grip.flat {
    width: 15px;
    height: 3px;
    margin: 4px 0 5px;
    background: repeating-linear-gradient(90deg, #44484e 0 3px, #eef0f3 3px 4px, transparent 4px 5px);
  }

  .bars {
    display: flex;
    flex: none;
    height: 24px;
  }

  .bar {
    display: flex;
    align-items: center;
    height: 24px;
    padding-left: 3px;
    border-top: 1px solid #dfe2e6;
    border-bottom: 1px solid #6c727b;
    background: linear-gradient(#cfd2d9, #959da8);
  }

  .bar.first {
    padding-left: 0;
  }

  .tool {
    position: relative;
    width: 21px;
    height: 16px;
  }

  .tool.dim {
    opacity: 0.3;
  }

  .tool.hot {
    width: 16px;
    margin-right: 5px;
    outline: 2px solid #fdc987;
    background: linear-gradient(#ffb95a, #ffe48c);
  }

  .cut {
    fill: none;
    stroke: #bcc1ca;
  }

  .more {
    position: absolute;
    right: 3px;
    bottom: -1px;
    border: 2px solid #2a489a;
    border-top-color: transparent;
    border-left-color: transparent;
  }

  .sep {
    flex: none;
    width: 8px;
    height: 22px;
    background: linear-gradient(90deg, transparent 2px, #6d737c 2px 3px, #fff 3px 5px, transparent 5px);
  }

  .bar select {
    height: 20px;
    margin-top: 2px;
    border: 1px solid #000;
    border-bottom: 0;
    border-right-color: #fff;
    background: #d4d0c8;
    appearance: none;
  }

  .short {
    width: 202px;
  }

  .mid {
    width: 143px;
  }

  .long {
    width: 362px;
  }

  .end {
    flex: none;
    width: 3px;
    height: 17px;
    margin: 0 2px;
    border: 1px solid #f4f4f4;
    border-right-color: #777;
  }

  /* work area */
  main {
    display: flex;
    flex: 1;
    min-height: 0;
  }

  .dock {
    display: flex;
    flex-direction: column;
    align-self: flex-start;
    flex: none;
    width: 20px;
    padding-bottom: 7px;
    overflow: hidden;
    background: linear-gradient(90deg, #d3d8de, #8f98a6);
    border-right: 1px solid #6f7780;
  }

  .dock .tool {
    height: 21px;
    padding-bottom: 5px;
  }

  .dock .more {
    right: 3px;
    bottom: 3px;
  }

  .dock .sep {
    width: 19px;
    height: 8px;
    background: linear-gradient(transparent 1px, #6d737c 1px 2px, #fff 2px 3px, transparent 3px);
  }

  .dock.right {
    margin-left: 1px;
    padding: 0 0 0 4px;
    border: 0;
    border-left: 1px solid #8e98a4;
  }

  .side {
    display: flex;
    flex-direction: column;
    flex: none;
    width: 220px;
    padding-bottom: 6px;
  }

  .properties {
    display: flex;
    flex-direction: column;
    flex: 1;
    padding: 0 4px 2px 3px;
    border-top: 1px solid #ddd;
    border-bottom: 2px solid #111;
    background: #e4e6e8;
  }

  .properties header {
    display: flex;
    align-items: center;
    gap: 8px;
    height: 19px;
    margin: 0 -4px 3px -3px;
    padding: 0 6px 1px 4px;
    background: #9da09f;
    color: #4f4f4f;
    fill: #4f4f4f;
  }

  .properties header span {
    flex: 1;
  }

  .prop-tools {
    display: flex;
    align-items: center;
    gap: 4px;
    height: 22px;
    padding-left: 2px;
    background: linear-gradient(#d0d3d9, #9299a5);
  }

  .prop-tools .hot {
    outline: 1px solid #c89b60;
    background: linear-gradient(#ffc27a, #ffe69a);
  }

  .prop-tools i {
    width: 2px;
    height: 12px;
    margin: 0 1px;
    border-left: 1px solid #555;
    border-right: 1px solid #fff;
  }

  .prop-list {
    flex: 1;
    border: 1px solid #d4d0c8;
    border-top: 2px solid #404040;
    border-left-color: #aaa;
    background: #fff;
  }

  .side-tabs {
    display: flex;
    gap: 7px;
    height: 22px;
    padding-left: 8px;
    color: #fff;
  }

  .side-tabs .current {
    padding: 0 4px;
    border: 1px solid #b9e4e6;
    border-top: 0;
    border-radius: 0 0 4px 4px;
    background: linear-gradient(#cdd4dc, #fff);
    color: #000;
  }

  .document {
    display: flex;
    flex-direction: column;
    flex: 1;
    min-width: 0;
    margin: 0 0 5px 5px;
    border-top: 1px solid #b8bcc0;
    background: #fff;
  }

  .doc-tabs {
    display: flex;
    align-items: flex-end;
    flex: none;
    height: 20px;
    padding: 0 6px 0 4px;
    border-bottom: 1px solid #a9adb2;
    background: linear-gradient(#939ca8, #cdd1d7);
  }

  .doc-tabs button {
    height: 17px;
    background: #fff;
    font-size: 12px;
  }

  .doc-close {
    display: flex;
    align-items: center;
    height: 17px;
    padding: 0 7px 0 9px;
    background: #fff;
    color: #444;
  }

  .drop {
    margin: 0 0 6px auto;
  }

  .sheet {
    display: flex;
    flex-direction: column;
    flex: 1;
    min-height: 0;
    margin: 0 4px 3px 2px;
    border: 1px solid #404040;
    border-width: 2px 1px 0 2px;
    border-right-color: #ccc;
  }

  .view {
    display: flex;
    flex: 1;
    min-height: 0;
  }

  .drawing {
    flex: 1;
    min-width: 0;
    overflow: hidden;
  }

  .scrollbar {
    display: flex;
    flex: none;
    background: repeating-conic-gradient(#d4d0c8 0 25%, #fff 0 50%) 0 0 / 2px 2px;
  }

  .scrollbar.v {
    flex-direction: column;
    width: 16px;
  }

  .scrollbar span {
    flex-basis: 0;
  }

  .thumb,
  .arrow,
  .step {
    border: 1px solid #404040;
    border-top-color: #d4d0c8;
    border-left-color: #d4d0c8;
    background: #d4d0c8;
    box-shadow: inset 1px 1px #fff, inset -1px -1px #808080;
  }

  .arrow {
    display: grid;
    place-items: center;
    width: 16px;
    height: 16px;
  }

  .sheet-bar {
    display: flex;
    flex: none;
    height: 20px;
    padding: 1px 0 2px;
    background: #d4d0c8;
  }

  .sheet-tabs {
    display: flex;
    flex: 781;
    align-items: flex-start;
    padding-left: 2px;
    border-top: 1px solid #404040;
  }

  .step {
    display: grid;
    place-items: center;
    width: 14px;
    height: 15px;
  }

  .track {
    width: 5px;
    height: 15px;
    background: repeating-conic-gradient(#d4d0c8 0 25%, #fff 0 50%) 0 0 / 2px 2px;
  }

  .sheet-tab {
    position: relative;
    z-index: 0;
    width: 27px;
    height: 15px;
    padding: 0 3px 1px 0;
    line-height: 13px;
  }

  /* the two slanted sides of a sheet tab */
  .sheet-tab::before,
  .sheet-tab::after {
    content: '';
    position: absolute;
    z-index: -1;
    inset: 0 3px 0 9px;
    border-right: 1px solid #404040;
    border-bottom: 1px solid #404040;
    transform: skewX(-20deg);
  }

  .sheet-tab::after {
    inset: 0 9px 0 3px;
    border-right: 0;
    border-left: 1px solid #404040;
    transform: skewX(20deg);
  }

  .model {
    width: auto;
    padding: 0 9px 1px 8px;
    font-weight: bold;
  }

  .model::before,
  .model::after {
    background: #fff;
  }

  .split {
    width: 19px;
    height: 17px;
    margin-right: 3px;
    padding: 0 0 0 1px;
    border: 1px solid #000;
  }

  .scrollbar.h {
    flex: 823;
    height: 16px;
    margin-top: 1px;
  }

  .resize {
    margin: 5px 0 0 6px;
  }

  /* command line */
  .command {
    display: flex;
    flex: none;
    height: 70px;
    padding-left: 20px;
    margin-right: 20px;
  }

  .command-side {
    display: flex;
    flex-direction: column;
    align-items: center;
    gap: 9px;
    width: 19px;
    padding-top: 5px;
    border-top: 1px solid #ddd;
    background: #9da09f;
    color: #4f4f4f;
    fill: #4f4f4f;
  }

  .turned {
    transform: rotate(90deg);
  }

  .command-name {
    margin-top: -6px;
    line-height: 16px;
    writing-mode: vertical-rl;
    transform: rotate(180deg);
  }

  .console {
    display: flex;
    flex-direction: column;
    flex: 1;
    border-top: 2px solid #808080;
    border-right: 2px solid #ddd;
    background: #d4d0c8;
  }

  .history {
    display: flex;
    flex: 1;
    border-bottom: 1px solid #fff;
    background: #fff;
  }

  .output {
    flex: 1;
    background: #000;
  }

  .prompt {
    display: flex;
    align-items: center;
    height: 17px;
    margin-top: 1px;
    border-top: 1px solid #404040;
    background: #fff;
    font: 12px/14px 'Liberation Mono', monospace;
  }

  .prompt input {
    flex: 1;
    min-width: 0;
    outline: 0;
  }

  .status {
    display: flex;
    flex: none;
    height: 21px;
    overflow: hidden;
    background: linear-gradient(#444852 0 8px, #2f2f2f 8px, #3a3a3a);
    color: #fff;
    line-height: 18px;
  }

  .coords {
    width: 210px;
    padding-top: 3px;
  }

  .mode,
  .scale {
    flex: none;
    height: 20px;
    margin-top: 1px;
    padding: 1px 5px 0 3px;
    border: 1px solid #888;
    border-bottom: 0;
    background: linear-gradient(#fff, #fff 50%, #c9d3e0 55%, #fff);
    color: #000;
    line-height: 18px;
  }

  .mode.on {
    background: linear-gradient(#ffdcae, #ffc880 50%, #ffae48 55%, #ffe08a);
  }

  .fill {
    flex: 1;
  }

  .status-tools {
    display: flex;
    width: 268px;
    padding-left: 6px;
    overflow: hidden;
    border-left: 1px solid #999;
    background: linear-gradient(#ccc, #888);
  }

  .mini {
    width: 20px;
    height: 20px;
    margin: 1px 2px 0 0;
    padding-top: 2px;
    border: 1px solid #eee;
    background: #14100e;
  }

  .mini.orange {
    background: linear-gradient(120deg, #8a3c14, #f06820);
  }

  .scale {
    width: 88px;
    margin-right: 2px;
  }

  /* settings dialog */
  .dialog {
    position: absolute;
    left: 1193px;
    top: 241px;
    width: 551px;
    border: 1px solid #777;
    border-radius: 8px 8px 2px 2px;
    background: #d4d0c8;
    box-shadow: 0 2px 10px 3px rgba(0, 0, 0, 0.6);
  }

  .dialog header {
    display: flex;
    align-items: center;
    height: 27px;
    padding: 0 13px 0 12px;
    border-top: 1px solid #fff;
    border-radius: 7px 7px 0 0;
    background: linear-gradient(#e6e6e6, #d2d2d2);
  }

  .dialog h2 {
    flex: 1;
    margin: 0 0 0 10px;
    color: #6b6b6b;
    font-size: 15px;
    line-height: 20px;
    text-align: center;
    text-shadow: 0 1px #fff;
  }

  .dialog-body {
    display: flex;
    gap: 9px;
    height: 400px;
    margin: 11px 12px 0 11px;
  }

  .tree-box {
    display: flex;
    flex: 1;
    min-width: 0;
    border: 2px solid #fff;
    border-top-color: #555;
    border-left-color: #555;
    background: #fff;
  }

  .tree {
    flex: 1;
    min-width: 0;
    overflow: hidden;
  }

  .row {
    display: flex;
    align-items: center;
    height: 16px;
    padding: 0 0 2px 24px;
    white-space: nowrap;
  }

  .level1 {
    background:
      repeating-linear-gradient(90deg, #808080 0 1px, #fff 1px 2px) 33px 7px / 5px 1px no-repeat,
      repeating-linear-gradient(#808080 0 1px, #fff 1px 2px) 28px 0 / 1px 16px no-repeat;
  }

  .level2 {
    padding-left: 57px;
    background:
      repeating-linear-gradient(90deg, #808080 0 1px, #fff 1px 2px) 47px 7px / 9px 1px no-repeat,
      repeating-linear-gradient(#808080 0 1px, #fff 1px 2px) 47px 0 / 1px 16px no-repeat,
      repeating-linear-gradient(#808080 0 1px, #fff 1px 2px) 28px 0 / 1px 16px no-repeat;
  }

  .level2.last {
    background:
      repeating-linear-gradient(90deg, #808080 0 1px, #fff 1px 2px) 47px 7px / 9px 1px no-repeat,
      repeating-linear-gradient(#808080 0 1px, #fff 1px 2px) 47px 0 / 1px 8px no-repeat,
      repeating-linear-gradient(#808080 0 1px, #fff 1px 2px) 28px 0 / 1px 16px no-repeat;
  }

  .expander {
    width: 9px;
    margin-right: 5px;
  }

  .row .text,
  .row label {
    flex: none;
    height: 14px;
    margin-left: 1px;
    padding-left: 1px;
    overflow: hidden;
  }

  .row .selected {
    outline: 1px dotted #e0c070;
    outline-offset: -1px;
    background: #0a246a;
    color: #fff;
  }

  .row input {
    width: 11px;
    height: 11px;
    margin: 0 1px 0 2px;
    border: 1px solid #000;
    background:
      linear-gradient(45deg, transparent 40%, #000 40% 60%, transparent 60%),
      linear-gradient(-45deg, transparent 40%, #000 40% 60%, transparent 60%),
      #fff;
    appearance: none;
  }

  .swatch {
    width: 11px;
    height: 11px;
    margin: 0 1px 0 2px;
    border: 1px solid #000;
  }

  .swatch.empty {
    background:
      linear-gradient(45deg, transparent 46%, #000 46% 54%, transparent 54%),
      linear-gradient(-45deg, transparent 46%, #000 46% 54%, transparent 54%);
  }

  .actions {
    display: flex;
    flex-direction: column;
    gap: 16px;
    width: 171px;
  }

  fieldset {
    display: flex;
    flex-direction: column;
    align-items: center;
    gap: 5px;
    min-width: 0;
    height: 98px;
    margin: -2px 0 0;
    padding: 4px 0 0;
    border: 1px solid #808080;
    box-shadow: 1px 1px #fff;
  }

  legend {
    height: 10px;
    margin-left: 7px;
    padding: 0 1px;
    line-height: 10px;
  }

  .hint {
    flex: 1;
    padding: 7px 30px 0 2px;
    border: 1px solid #808080;
    box-shadow: 1px 1px #fff, inset 1px 1px #fff;
    line-height: 13px;
  }

  .push {
    width: 75px;
    height: 23px;
    border: 1px solid #404040;
    border-top-color: #fff;
    border-left-color: #fff;
    background: #d4d0c8;
    box-shadow: inset -1px -1px #808080;
  }

  .push:disabled {
    color: #808080;
    text-shadow: 1px 1px #fff;
  }

  .push.default {
    border: 1px solid #000;
    box-shadow: inset 1px 1px #fff, inset -1px -1px #404040, inset -2px -2px #808080;
  }

  .dialog-foot {
    display: flex;
    justify-content: flex-end;
    gap: 10px;
    padding: 11px 12px 11px 0;
  }
</style>
